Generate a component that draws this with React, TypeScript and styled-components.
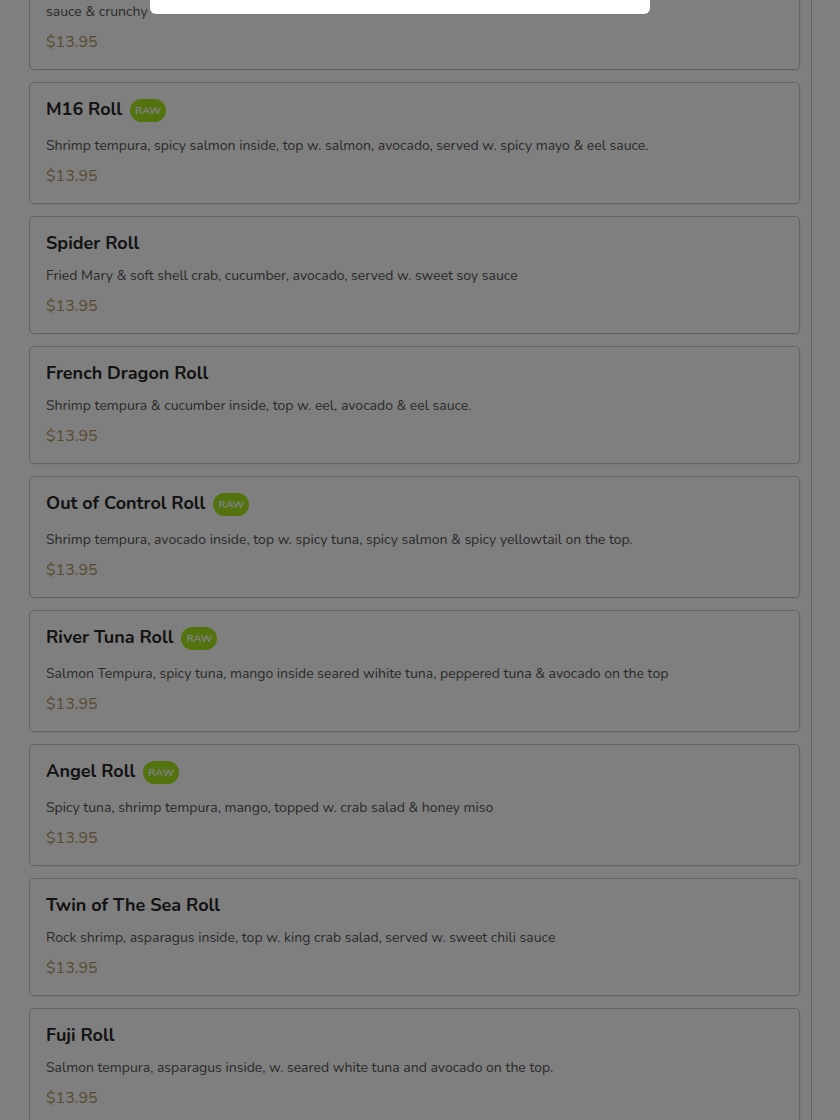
import styled, { createGlobalStyle } from 'styled-components';

const GlobalStyle = createGlobalStyle`
  html, body {
    margin: 0;
    padding: 0;
    background: #ffffff;
    overflow: hidden;
  }
  body {
    font-family: Nunito, Lato, "Open Sans", sans-serif;
    color: #2a2a2a;
  }
`;

const Page = styled.main`
  width: 771px;
  height: 1120px;
  overflow: hidden;
  padding: 0 11px 0 29px;
  border-right: 1px solid #c8c8c8;
`;

const List = styled.div`
  display: flex;
  flex-direction: column;
  gap: 12px;
  margin-top: -68px;
`;

const Card = styled.article`
  border: 1px solid #c6c6c6;
  border-radius: 5px;
  padding: 16px 16px 16px;
  box-shadow: 1px 1px 0 rgba(0, 0, 0, 0.05);
  background: #fff;
`;

const Header = styled.div`
  display: flex;
  align-items: flex-start;
  gap: 8px;
`;

const Name = styled.h3`
  margin: 0;
  font-size: 18px;
  line-height: 21px;
  font-weight: 700;
  color: #262626;
`;

const Badge = styled.span`
  display: inline-flex;
  align-items: center;
  justify-content: center;
  height: 23px;
  padding: 0 5px;
  margin-bottom: 3px;
  border-radius: 12px;
  background: #a4e61a;
  color: #ffffff;
  font-size: 10.5px;
  font-weight: 700;
`;

const Description = styled.p<{ $tight?: boolean }>`
  margin: ${({ $tight }) => ($tight ? '11px' : '12px')} 0 0;
  font-size: 14px;
  line-height: 20px;
  color: #545454;
  white-space: pre-line;
`;

const Price = styled.div`
  margin-top: 9px;
  font-size: 16px;
  line-height: 22px;
  color: #b4955f;
`;

const Overlay = styled.div`
  position: fixed;
  inset: 0;
  background: rgba(0, 0, 0, 0.5);
`;

const Modal = styled.div`
  position: absolute;
  left: 150px;
  top: -386px;
  width: 500px;
  height: 400px;
  background: #fff;
  border-radius: 6px;
`;

interface Roll {
  name: string;
  raw?: boolean;
  description: string;
  price: string;
}

const ROLLS: Roll[] = [
  {
    name: 'Crunchy Roll',
    description:
      'Shrimp tempura, crab salad inside, top w. avocado & spicy tuna, served w. spicy mayo, eel\nsauce & crunchy',
    price: '$13.95',
  },
  {
    name: 'M16 Roll',
    raw: true,
    description: 'Shrimp tempura, spicy salmon inside, top w. salmon, avocado, served w. spicy mayo & eel sauce.',
    price: '$13.95',
  },
  {
    name: 'Spider Roll',
    description: 'Fried Mary & soft shell crab, cucumber, avocado, served w. sweet soy sauce',
    price: '$13.95',
  },
  {
    name: 'French Dragon Roll',
    description: 'Shrimp tempura & cucumber inside, top w. eel, avocado & eel sauce.',
    price: '$13.95',
  },
  {
    name: 'Out of Control Roll',
    raw: true,
    description: 'Shrimp tempura, avocado inside, top w. spicy tuna, spicy salmon & spicy yellowtail on the top.',
    price: '$13.95',
  },
  {
    name: 'River Tuna Roll',
    raw: true,
    description: 'Salmon Tempura, spicy tuna, mango inside seared wihite tuna, peppered tuna & avocado on the top',
    price: '$13.95',
  },
  {
    name: 'Angel Roll',
    raw: true,
    description: 'Spicy tuna, shrimp tempura, mango, topped w. crab salad & honey miso',
    price: '$13.95',
  },
  {
    name: 'Twin of The Sea Roll',
    description: 'Rock shrimp, asparagus inside, top w. king crab salad, served w. sweet chili sauce',
    price: '$13.95',
  },
  {
    name: 'Fuji Roll',
    description: 'Salmon tempura, asparagus inside, w. seared white tuna and avocado on the top.',
    price: '$13.95',
  },
];

function MenuCard({ roll }: { roll: Roll }) {
  return (
    <Card>
      <Header>
        <Name>{roll.name}</Name>
        {roll.raw && <Badge>RAW</Badge>}
      </Header>
      <Description $tight={roll.raw}>{roll.description}</Description>
      <Price>{roll.price}</Price>
    </Card>
  );
}

export default function App() {
  return (
    <>
      <GlobalStyle />
      <Page>
        <List>
          {ROLLS.map((roll) => (
            <MenuCard key={roll.name} roll={roll} />
          ))}
        </List>
      </Page>
      <Overlay>
        <Modal />
      </Overlay>
    </>
  );
}
